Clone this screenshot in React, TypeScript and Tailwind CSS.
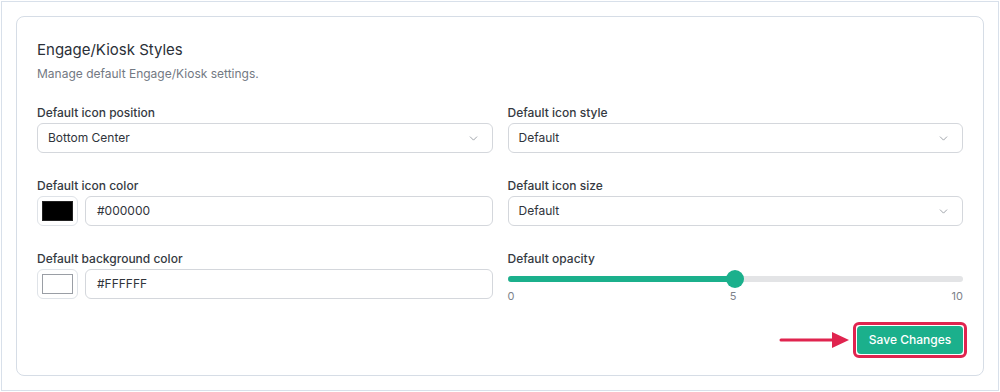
import { ChevronDown } from "lucide-react";

const Label = ({ children }: { children: React.ReactNode }) => (
  <div className="text-[12px] leading-[18px] font-medium text-[#353a42] mb-[1px]">{children}</div>
);

const Select = ({ value }: { value: string }) => (
  <div className="h-[30px] rounded-md border border-[#d4d7dc] flex items-center justify-between pl-[10px] pr-[12px] text-[12px] text-[#30343b]">
    <span>{value}</span>
    <ChevronDown size={13} strokeWidth={1.5} className="text-[#8a8f98]" />
  </div>
);

const ColorField = ({ color, value, inner }: { color: string; value: string; inner: string }) => (
  <div className="flex gap-[7px]">
    <div className="w-[41px] h-[30px] rounded-md border border-[#dfe3e8] p-[4px] flex">
      <div className={`flex-1 border ${inner}`} style={{ backgroundColor: color }} />
    </div>
    <div className="flex-1 h-[30px] rounded-md border border-[#d4d7dc] flex items-center px-[11px] text-[12px] text-[#30343b]">
      {value}
    </div>
  </div>
);

export default function App() {
  return (
    <div className="w-[1000px] h-[392px] bg-white p-px" style={{ fontFamily: "Inter, 'Noto Sans', sans-serif" }}>
      <div className="h-full border border-[#d8e0ea] pt-[14px] px-[14px] pb-[14px]">
        <div className="h-[360px] rounded-lg border border-[#d6dde6] pt-[21px] px-5 pb-[20px]">
          <h2 className="text-[15px] leading-6 text-[#2b3038]">Engage/Kiosk Styles</h2>
          <p className="text-[12px] leading-5 text-[#737983] mt-[2px]">Manage default Engage/Kiosk settings.</p>

          <div className="grid grid-cols-2 gap-x-[15px] gap-y-[24px] mt-[20px]">
            <div>
              <Label>Default icon position</Label>
              <Select value="Bottom Center" />
            </div>
            <div>
              <Label>Default icon style</Label>
              <Select value="Default" />
            </div>
            <div>
              <Label>Default icon color</Label>
              <ColorField color="#000000" value="#000000" inner="border-[#222]" />
            </div>
            <div>
              <Label>Default icon size</Label>
              <Select value="Default" />
            </div>
            <div>
              <Label>Default background color</Label>
              <ColorField color="#ffffff" value="#FFFFFF" inner="border-[#9a9ea5]" />
            </div>
            <div>
              <Label>Default opacity</Label>
              <div className="relative h-[18px] mt-[2px] flex items-center">
                <div className="w-full h-[6px] rounded-full bg-[#e3e4e6]">
                  <div className="h-full w-1/2 rounded-full bg-[#1bb08c]" />
                </div>
                <div className="absolute left-1/2 top-1/2 -translate-x-1/2 -translate-y-1/2 w-[18px] h-[18px] rounded-full bg-[#1bb08c]" />
              </div>
              <div className="flex justify-between text-[11px] leading-4 text-[#7d828a]">
                <span>0</span>
                <span>5</span>
                <span>10</span>
              </div>
            </div>
          </div>

          <div className="flex justify-end items-center mt-[22px]">
            <svg width="72" height="20" viewBox="0 0 72 20" className="mr-[6px]">
              <line x1="2" y1="10" x2="56" y2="10" stroke="#e0244f" strokeWidth="3" strokeLinecap="round" />
              <polygon points="53,2 70,10 53,18" fill="#e0244f" />
            </svg>
            <div className="relative">
              <button className="h-[28px] w-[106px] rounded bg-[#1bb08c] text-white text-[12px] font-medium">
                Save Changes
              </button>
              <div className="absolute -inset-[4px] rounded-md border-[3px] border-[#e0244f]" />
            </div>
          </div>
        </div>
      </div>
    </div>
  );
}
